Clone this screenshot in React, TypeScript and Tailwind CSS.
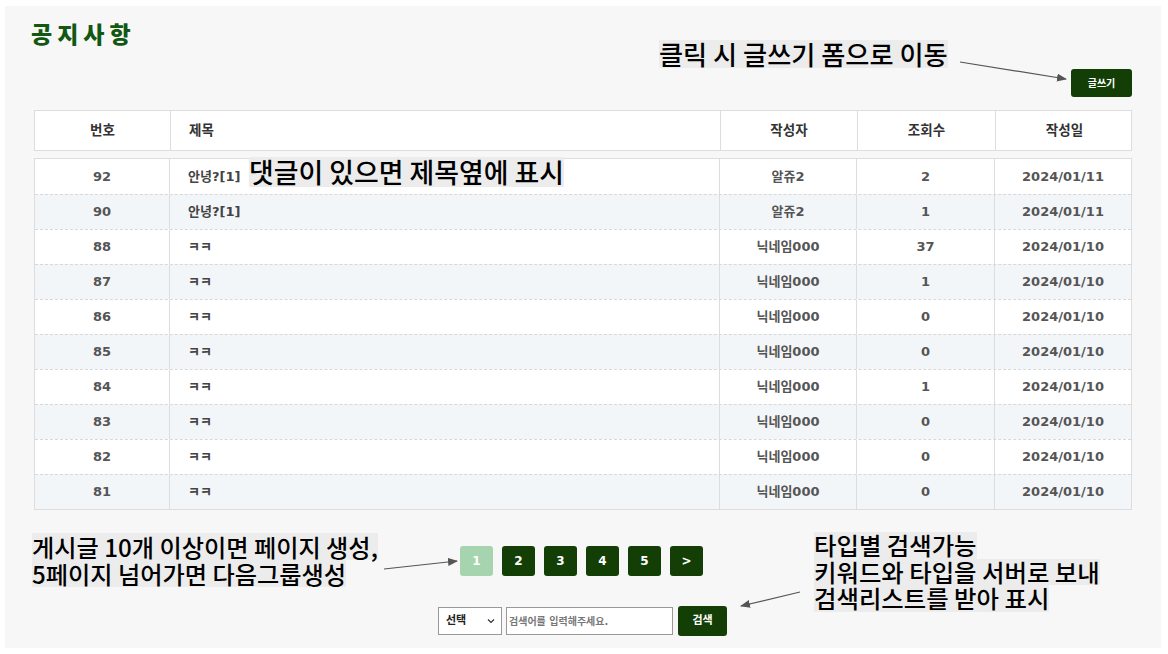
import React from "react";

const rows = [
  { no: 92, title: "안녕?[1]", writer: "알쥬2", views: 2, date: "2024/01/11" },
  { no: 90, title: "안녕?[1]", writer: "알쥬2", views: 1, date: "2024/01/11" },
  { no: 88, title: "ㅋㅋ", writer: "닉네임000", views: 37, date: "2024/01/10" },
  { no: 87, title: "ㅋㅋ", writer: "닉네임000", views: 1, date: "2024/01/10" },
  { no: 86, title: "ㅋㅋ", writer: "닉네임000", views: 0, date: "2024/01/10" },
  { no: 85, title: "ㅋㅋ", writer: "닉네임000", views: 0, date: "2024/01/10" },
  { no: 84, title: "ㅋㅋ", writer: "닉네임000", views: 1, date: "2024/01/10" },
  { no: 83, title: "ㅋㅋ", writer: "닉네임000", views: 0, date: "2024/01/10" },
  { no: 82, title: "ㅋㅋ", writer: "닉네임000", views: 0, date: "2024/01/10" },
  { no: 81, title: "ㅋㅋ", writer: "닉네임000", views: 0, date: "2024/01/10" },
];

const cell = "font-['DejaVu_Sans','Noto_Sans_CJK_KR',sans-serif] font-bold";
const note = "font-['Noto_Sans_CJK_KR',sans-serif] font-medium text-black bg-[#ececec] w-fit whitespace-nowrap";

export default function App() {
  return (
    <div className="min-h-[654px] bg-white pt-[6px] pl-[5px]">
      <div className="relative w-[1156px] h-[642px] bg-[#f7f7f7] px-[29px] flex flex-col">
        <h1 className="mt-[12px] -ml-[3px] h-[30px] leading-[30px] text-[23px] font-black tracking-[5px] text-[#125812] font-['Noto_Sans_CJK_KR',sans-serif]">
          공지사항
        </h1>
        <div className="mt-[21px] flex justify-end">
          <button className={`w-[61px] h-[28px] rounded-[3px] bg-[#133f06] text-white ${cell} text-[10px]`}>
            글쓰기
          </button>
        </div>

        <div className={`mt-[13px] grid grid-cols-[136px_550px_137px_138px_137px] h-[41px] bg-white border border-[#dddddd] text-[#333] ${cell} text-[13.5px]`}>
          <div className="flex items-center justify-center border-r border-[#dddddd]">번호</div>
          <div className="flex items-center pl-[18px] border-r border-[#dddddd]">제목</div>
          <div className="flex items-center justify-center border-r border-[#dddddd]">작성자</div>
          <div className="flex items-center justify-center border-r border-[#dddddd]">조회수</div>
          <div className="flex items-center justify-center">작성일</div>
        </div>

        <div className={`mt-[7px] border border-[#dddddd] text-[#555] ${cell} text-[13px]`}>
          {rows.map((r, i) => (
            <div
              key={r.no}
              className={`grid grid-cols-[135px_550px_137px_138px_136px] h-[35px] ${i % 2 === 0 ? "bg-white" : "bg-[#f3f6f9]"} ${i > 0 ? "border-t border-dashed border-[#d8d8d8]" : ""}`}
            >
              <div className="flex items-center justify-center border-r border-[#dddddd]">{r.no}</div>
              <div className="flex items-center pl-[18px] border-r border-[#dddddd] text-[#444]">{r.title}</div>
              <div className="flex items-center justify-center border-r border-[#dddddd]">{r.writer}</div>
              <div className="flex items-center justify-center border-r border-[#dddddd]">{r.views}</div>
              <div className="flex items-center justify-center">{r.date}</div>
            </div>
          ))}
        </div>

        <div className={`mt-[36px] ml-[426px] flex gap-[9px] text-white ${cell} text-[12px]`}>
          {["1", "2", "3", "4", "5", ">"].map((p, i) => (
            <div
              key={p}
              className={`w-[33px] h-[30px] rounded-[3px] flex items-center justify-center ${i === 0 ? "bg-[#a6d4ae]" : "bg-[#133f06]"}`}
            >
              {p}
            </div>
          ))}
        </div>

        <div className={`mt-[30px] flex items-center justify-center gap-[4px] pr-[1px] ${cell} text-[11px]`}>
          <div className="w-[64px] h-[28px] bg-white border border-[#999] flex items-center justify-between pl-[7px] pr-[5px] text-[#222]">
            <span>선택</span>
            <svg width="10" height="10" viewBox="0 0 10 10">
              <path d="M2 3.5 L5 6.5 L8 3.5" fill="none" stroke="#333" strokeWidth="1.2" />
            </svg>
          </div>
          <div className="w-[167px] h-[28px] bg-white border border-[#999] flex items-center pl-[2px] text-[#777] text-[10px]">
            검색어를 입력해주세요.
          </div>
          <button className="ml-[1px] w-[49px] h-[30px] rounded-[3px] bg-[#133f06] text-white">검색</button>
        </div>

        {/* Annotations */}
        <div className={`absolute left-[654px] top-[34px] text-[26.2px] leading-[28px] ${note}`}>
          클릭 시 글쓰기 폼으로 이동
        </div>
        <div className={`absolute left-[244px] top-[151px] text-[26.9px] leading-[30px] ${note}`}>
          댓글이 있으면 제목옆에 표시
        </div>
        <div className="absolute left-[27px] top-[527px] flex flex-col">
          <div className={`text-[24.2px] leading-[27px] h-[27px] ${note}`}>게시글 10개 이상이면 페이지 생성,</div>
          <div className={`text-[24.2px] leading-[27px] h-[27px] ${note}`}>5페이지 넘어가면 다음그룹생성</div>
        </div>
        <div className="absolute left-[809px] top-[526px] flex flex-col">
          <div className={`text-[24.4px] leading-[26.5px] h-[26.5px] ${note}`}>타입별 검색가능</div>
          <div className={`text-[24.4px] leading-[26.5px] h-[26.5px] ${note}`}>키워드와 타입을 서버로 보내</div>
          <div className={`text-[24.4px] leading-[26.5px] h-[26.5px] ${note}`}>검색리스트를 받아 표시</div>
        </div>

        <svg className="absolute left-0 top-0 pointer-events-none" width="1156" height="642">
          <defs>
            <marker id="ah" markerWidth="10" markerHeight="8" refX="9" refY="4" orient="auto" markerUnits="userSpaceOnUse">
              <path d="M0 0 L10 4 L0 8 Z" fill="#555" />
            </marker>
          </defs>
          <line x1="955" y1="56" x2="1061" y2="73" stroke="#555" strokeWidth="1.2" markerEnd="url(#ah)" />
          <line x1="379" y1="563" x2="452" y2="555" stroke="#555" strokeWidth="1.2" markerEnd="url(#ah)" />
          <line x1="795" y1="586" x2="736" y2="600" stroke="#555" strokeWidth="1.2" markerEnd="url(#ah)" />
        </svg>
      </div>
    </div>
  );
}
